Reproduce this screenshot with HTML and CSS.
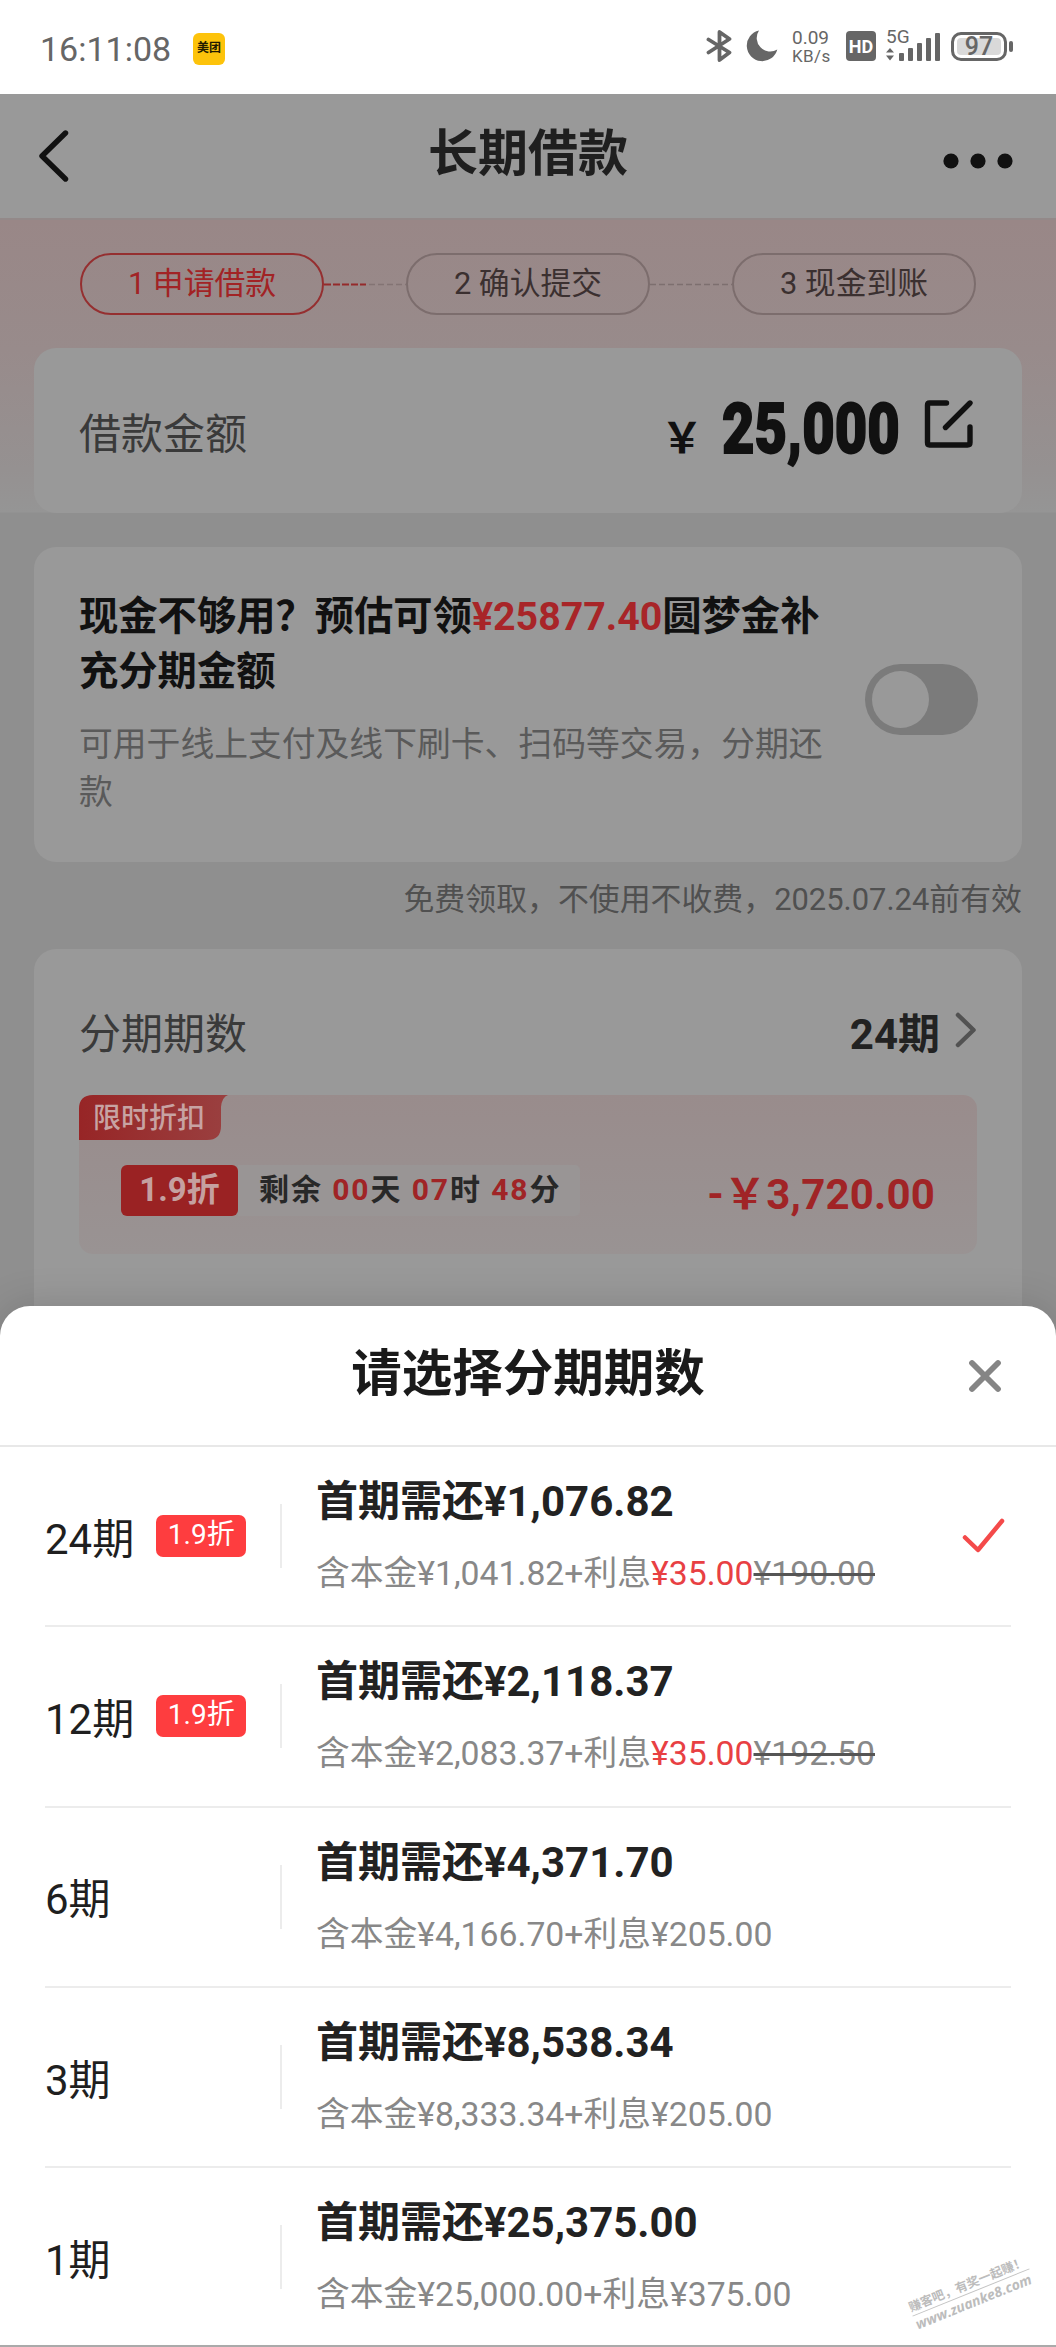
FILE: index.html
```html
<!DOCTYPE html>
<html lang="zh-CN">
<head>
<meta charset="utf-8">
<title>长期借款</title>
<link rel="stylesheet" href="styles.css">
</head>
<body>
<div class="screen">
  <header class="status">
    <div class="status-left">
      <span class="clock">16:11:08</span>
      <span class="app-badge">美团</span>
    </div>
    <div class="status-right">
      <svg class="bt" width="27" height="34" viewBox="0 0 27 34" fill="none" stroke="#666" stroke-width="3.8" stroke-linejoin="round" stroke-linecap="round"><path d="M2.500 10.500L23.500 23.500L13.500 31V3L23.500 10L2.500 23.500"/></svg>
      <svg class="moon" width="32" height="32" viewBox="0 0 32 32"><path d="M13 0.500A15.500 15.500 0 1 0 31.300 19.500A13.500 13.500 0 0 1 13 0.500Z" fill="#666"/></svg>
      <div class="speed"><span>0.09</span><span>KB/s</span></div>
      <span class="hd">HD</span>
      <div class="signal">
        <span class="net">5G</span>
        <svg width="56" height="30" viewBox="0 0 56 30" fill="#666"><path d="M0 21.500L4 17L8 21.500ZM0 24.500L4 29.500L8 24.500Z"/><rect x="13" y="22" width="5" height="8" rx="1"/><rect x="22" y="17" width="5" height="13" rx="1"/><rect x="31" y="12" width="5" height="18" rx="1"/><rect x="40" y="7" width="5" height="23" rx="1"/><rect x="49" y="2" width="5" height="28" rx="1"/></svg>
      </div>
      <div class="battery"><span class="cell">97</span><i class="nub"></i></div>
    </div>
  </header>

  <main class="page">
    <nav class="navbar">
      <svg width="32" height="52" viewBox="0 0 32 52" fill="none" stroke="#111" stroke-width="5.400" stroke-linecap="round" stroke-linejoin="round"><path d="M27.500 3L4 26L27.500 49"/></svg>
      <h1>长期借款</h1>
      <svg width="70" height="16" viewBox="0 0 70 16" fill="#111"><circle cx="8" cy="8" r="7.600"/><circle cx="35" cy="8" r="7.600"/><circle cx="62" cy="8" r="7.600"/></svg>
    </nav>

    <div class="body">
      <div class="steps">
        <span class="step active">1 申请借款</span>
        <svg class="link" width="82" height="3"><path d="M0 1.500H42" stroke="#952a2b" stroke-width="2" stroke-dasharray="7 2"/><path d="M45 1.500H82" stroke="#837474" stroke-width="1.500" stroke-dasharray="6 3"/></svg>
        <span class="step">2 确认提交</span>
        <svg class="link" width="82" height="3"><path d="M0 1.500H82" stroke="#7d6f6f" stroke-width="1.500" stroke-dasharray="6 3"/></svg>
        <span class="step">3 现金到账</span>
      </div>

      <section class="card amount">
        <span class="label">借款金额</span>
        <div class="value">
          <span class="yen">￥</span>
          <span class="number"><b>25,000</b></span>
          <svg width="50" height="50" viewBox="0 0 50 50" fill="none" stroke="#111" stroke-width="5.400" stroke-linecap="round" stroke-linejoin="round"><path d="M22.500 4H5.500Q3.500 4 3.500 6V43.500Q3.500 46 5.500 46H43.500Q46 46 46 43.500V28M21.500 28.500L46 4"/></svg>
        </div>
      </section>

      <section class="card dream">
        <div class="dream-text">
          <h2>现金不够用？预估可领<em>¥25877.40</em>圆梦金补<br>充分期金额</h2>
          <p>可用于线上支付及线下刷卡、扫码等交易，分期还<br>款</p>
        </div>
        <span class="toggle"><i></i></span>
      </section>
      <p class="note">免费领取，不使用不收费，2025.07.24前有效</p>

      <section class="card term">
        <div class="term-head">
          <span class="label">分期期数</span>
          <div class="term-value">24期
            <svg width="22" height="38" viewBox="0 0 22 38" fill="none" stroke="#525252" stroke-width="4.500" stroke-linecap="round" stroke-linejoin="round"><path d="M3 4L18.500 19L3 34"/></svg>
          </div>
        </div>
        <div class="promo">
          <div class="tag">
            <svg width="150" height="46" viewBox="0 0 150 46"><defs><linearGradient id="tagFill" x1="0" y1="0" x2="1" y2="0"><stop offset="0" stop-color="#972526"/><stop offset="1" stop-color="#9a4040"/></linearGradient></defs><path d="M0 45V14Q0 0 14 0H149Q143 2 142 12V31Q142 45 128 45Z" fill="url(#tagFill)"/></svg>
            <span>限时折扣</span>
          </div>
          <div class="promo-row">
            <span class="off">1.9折</span>
            <span class="countdown">剩余 <em>00</em>天 <em>07</em>时 <em>48</em>分</span>
            <span class="saving">-￥3,720.00</span>
          </div>
        </div>
      </section>
    </div>
  </main>

  <section class="sheet">
    <div class="sheet-head">
      <h2>请选择分期期数</h2>
      <svg width="36" height="36" viewBox="0 0 36 36" fill="none" stroke="#858585" stroke-width="5.800" stroke-linecap="round"><path d="M5 5L31 31M31 5L5 31"/></svg>
    </div>
    <ul class="options">
      <li>
        <div class="period">24期<span class="chip">1.9折</span></div>
        <div class="detail"><strong>首期需还¥1,076.82</strong><p>含本金¥1,041.82+利息<em>¥35.00</em><s>¥190.00</s></p></div>
        <svg class="check" width="44" height="36" viewBox="0 0 44 36" fill="none" stroke="#f44a4a" stroke-width="4.500" stroke-linecap="round" stroke-linejoin="round"><path d="M3 19.500L16 32L40 3"/></svg>
      </li>
      <li>
        <div class="period">12期<span class="chip">1.9折</span></div>
        <div class="detail"><strong>首期需还¥2,118.37</strong><p>含本金¥2,083.37+利息<em>¥35.00</em><s>¥192.50</s></p></div>
      </li>
      <li>
        <div class="period">6期</div>
        <div class="detail"><strong>首期需还¥4,371.70</strong><p>含本金¥4,166.70+利息¥205.00</p></div>
      </li>
      <li>
        <div class="period">3期</div>
        <div class="detail"><strong>首期需还¥8,538.34</strong><p>含本金¥8,333.34+利息¥205.00</p></div>
      </li>
      <li>
        <div class="period">1期</div>
        <div class="detail"><strong>首期需还¥25,375.00</strong><p>含本金¥25,000.00+利息¥375.00</p></div>
      </li>
    </ul>
    <div class="watermark"><span class="wm-cn">赚客吧，有奖一起赚！</span><span class="wm-url">www.zuanke8.com</span></div>
  </section>
</div>
</body>
</html>
```
FILE: styles.css
```css
* { box-sizing: border-box; margin: 0; padding: 0; }
body {
  width: 1056px;
  background: #fff;
  font-family: Roboto, "Noto Sans CJK SC", sans-serif;
  color: #1f1f1f;
}
em { font-style: normal; }
svg { display: block; flex: none; }
.screen { width: 1056px; height: 2347px; overflow: hidden; white-space: nowrap; }

/* Status bar */
.status { height: 94px; display: flex; justify-content: space-between; padding: 0 43px 0 40px; color: #666; }
.status-left { display: flex; align-items: center; gap: 21px; padding-top: 4px; }
.clock { font-size: 34px; width: 132px; }
.app-badge {
  width: 32px; height: 32px; border-radius: 6px; background: #fdc30b; color: #221a00;
  font-size: 12px; font-weight: 700; line-height: 31px; text-align: center;
}
.status-right { display: flex; align-items: flex-start; padding-top: 30px; }
.bt { margin-top: -1px; margin-right: 13px; }
.moon { margin-right: 14px; }
.speed { width: 41px; margin: -1px 13px 0 0; display: flex; flex-direction: column; font-size: 19px; line-height: 18px; }
.speed span + span { font-size: 17px; letter-spacing: .4px; }
.hd {
  width: 30px; height: 30px; margin: 1px 10px 0 0; border-radius: 4px; background: #666; color: #fff;
  font-size: 18px; font-weight: 700; line-height: 31px; text-align: center;
}
.signal { position: relative; width: 56px; margin-right: 9px; }
.net { position: absolute; left: 0; top: -2px; font-size: 19px; line-height: 18px; }
.signal svg { margin-top: 1px; }
.battery { display: flex; align-items: center; gap: 2px; padding-top: 2px; }
.cell {
  width: 56px; height: 29px; border: 3px solid #666; border-radius: 10px; background: #d9d9d9;
  box-shadow: inset 0 0 0 3px #fff; font-size: 25px; font-weight: 500; line-height: 24px; text-align: center;
}
.nub { width: 4px; height: 11px; border-radius: 2px; background: #666; }

/* Page behind the sheet */
.page { height: 1242px; background: #8f8f8f; overflow: hidden; }
.navbar { height: 124px; background: #999; display: flex; align-items: center; justify-content: space-between; padding: 0 43px 0 38px; }
.navbar h1 { font-size: 50px; line-height: 60px; padding: 0 0 4px 43px; }
.navbar > svg:last-child { margin-top: 9px; }
.body { padding: 33px 34px 0; background: linear-gradient(#998787 0, #988b8b 130px, #959191 250px, #959595 292px, #8f8f8f 293px); border-top: 2px solid #938989; }
.steps { display: flex; align-items: center; height: 62px; padding: 0 46px; margin-bottom: 33px; }
.step {
  width: 244px; height: 62px; border: 2px solid #7c6d6d; border-radius: 31px;
  font-size: 30.800px; line-height: 57px; text-align: center; color: #3b3030; flex: none;
}
.step.active { border-color: #952f30; color: #a22325; }
.card { background: #999; border-radius: 22px; }
.label { font-size: 42px; color: #3a3a3a; }
.amount { height: 165px; padding: 0 48px 0 45px; display: flex; justify-content: space-between; align-items: center; }
.value { display: flex; align-items: center; color: #111; }
.yen { font-family: "Noto Sans CJK SC", sans-serif; font-size: 42px; font-weight: 700; margin: 7px 19px 0 0; }
.number { width: 179px; margin-right: 23px; margin-top: -4px; }
.number b { display: inline-block; font-size: 71px; font-weight: 900; line-height: 80px; -webkit-text-stroke: 1.800px #111; transform: scaleX(.79); transform-origin: left; }
.value svg { margin-top: -14px; }
.dream { height: 315px; margin-top: 34px; padding: 43px 44px 0 45px; display: flex; justify-content: space-between; }
.dream h2 { font-size: 39.300px; line-height: 55px; color: #111; }
.dream h2 em { color: #a82528; }
.dream p { font-size: 33.800px; line-height: 48px; margin-top: 21px; color: #5a5a5a; }
.toggle { width: 113px; height: 71px; margin-top: 74px; border-radius: 36px; background: #7b7b7b; padding: 7px; }
.toggle i { display: block; width: 57px; height: 57px; border-radius: 50%; background: #999; }
.note { height: 87px; padding-top: 15px; font-size: 30.900px; line-height: 46px; text-align: right; color: #505050; }
.term { height: 420px; padding: 42px 45px 0; border-radius: 22px 22px 0 0; }
.term-head { height: 78px; display: flex; justify-content: space-between; align-items: center; }
.term-value { display: flex; align-items: center; gap: 15px; font-size: 42px; font-weight: 700; color: #222; }
.promo { height: 159px; margin-top: 26px; border-radius: 14px; background: linear-gradient(#998c8c, #999393); }
.tag { position: relative; height: 46px; }
.tag span { position: absolute; left: 14px; top: 3px; font-size: 28px; line-height: 42px; color: #c7a3a3; font-weight: 500; }
.promo-row { display: flex; align-items: center; height: 51px; margin-top: 24px; padding: 0 42px; }
.off { width: 117px; height: 51px; border-radius: 6px; background: #9a2223; color: #c5a0a0; font-size: 33px; font-weight: 700; line-height: 49px; text-align: center; }
.countdown { width: 342px; height: 51px; padding-left: 21px; line-height: 50px; font-size: 30px; letter-spacing: 1.900px; font-weight: 700; color: #282828; background: #999595; border-radius: 0 5px 5px 0; }
.countdown em, .saving { color: #a02426; }
.saving { margin-left: auto; font-size: 42px; letter-spacing: .2px; font-weight: 700; }

/* Bottom sheet */
.sheet { position: relative; height: 1041px; margin-top: -30px; border-radius: 30px 30px 0 0; background: #fff; border-bottom: 2px solid #aaa; box-shadow: 0 0 40px rgba(0, 0, 0, .15); }
.sheet-head { height: 141px; border-bottom: 2px solid #e8e8e8; display: flex; align-items: center; justify-content: space-between; padding: 0 53px 0 89px; }
.sheet-head h2 { flex: 1; text-align: center; font-size: 50.500px; line-height: 74px; padding-bottom: 4px; color: #1a1a1a; }
.options { list-style: none; padding: 0 45px; }
.options li { display: flex; align-items: center; height: 180.300px; border-bottom: 2px solid #ececec; }
.options li:last-child { border-bottom: 0; height: 178px; }
.period { width: 237px; height: 64px; border-right: 2px solid #ececec; display: flex; align-items: center; gap: 22px; font-size: 42px; line-height: 66px; color: #1f1f1f; padding-top: 7px; }
.chip { width: 90px; height: 42px; margin-top: -8px; border-radius: 7px; background: #fe3d3f; color: #fff; font-size: 28px; line-height: 39px; text-align: center; }
.detail { padding: 0 0 4px 34px; flex: 1; }
.detail strong { display: block; font-size: 42px; line-height: 66px; color: #222; }
.detail p { font-size: 33.750px; line-height: 50px; margin-top: 14px; color: #888; }
.detail em { color: #e84043; }
.detail s { text-decoration-color: #555; }
.check { margin-right: 5px; }

.watermark { position: absolute; left: 908px; top: 969px; width: 126px; transform: rotate(-22deg); color: #bcbcbc; font-weight: 700; }
.watermark span { display: block; }
.wm-cn { font-size: 12.500px; line-height: 17px; border-bottom: 1px solid #c4c4c4; }
.wm-url { font-family: "Open Sans", sans-serif; font-size: 14px; line-height: 17px; font-style: italic; }
```
